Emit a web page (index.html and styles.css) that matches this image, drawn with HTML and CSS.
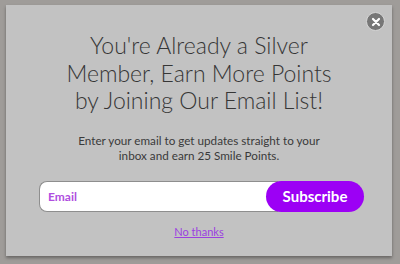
FILE: index.html
```html
<!DOCTYPE html>
<html lang="en">
<head>
  <meta charset="UTF-8">
  <title>Join our email list</title>
  <link rel="stylesheet" href="styles.css">
</head>
<body>
  <div class="popup">
    <button class="popup-close" aria-label="Close">
      <svg width="10" height="10" viewBox="0 0 10 10">
        <path d="M2 2 L8 8 M8 2 L2 8" stroke="#fff" stroke-width="2.2" stroke-linecap="round"/>
      </svg>
    </button>
    <h1 class="popup-titulo">You're Already a Silver<br>Member, Earn More Points<br>by Joining Our Email List!</h1>
    <p class="popup-texto">Enter your email to get updates straight to your<br>inbox and earn 25 Smile Points.</p>
    <form class="popup-form">
      <input class="popup-email" type="email" placeholder="Email">
      <button class="popup-boton" type="button">Subscribe</button>
    </form>
    <a class="popup-no" href="#">No thanks</a>
  </div>
</body>
</html>
```

FILE: styles.css
```css
* {
  margin: 0;
  padding: 0;
  box-sizing: border-box;
}
body {
  height: 100vh;
  background: #9f9c99;
  font-family: Lato, 'Noto Sans', sans-serif;
  padding: 5px 8px 8px 6px;
  overflow: hidden;
}
.popup {
  position: relative;
  width: 386px;
  height: 251px;
  background: #c2c2c2;
  box-shadow: 0 2px 3px rgba(0,0,0,0.35);
  display: flex;
  flex-direction: column;
  align-items: center;
  padding-top: 27px;
  color: #363636;
  text-align: center;
}
.popup-close {
  position: absolute;
  top: 7px;
  right: 7px;
  width: 19px;
  height: 19px;
  border-radius: 50%;
  background: #777;
  border: 1.5px solid #d6d6d6;
  display: flex;
  justify-content: center;
  align-items: center;
  cursor: pointer;
}
.popup-titulo {
  font-weight: 300;
  font-size: 23px;
  line-height: 27.5px;
}
.popup-texto {
  margin-top: 18px;
  font-size: 11.7px;
  line-height: 15px;
  color: #3a3a3a;
}
.popup-form {
  margin-top: 18px;
  display: flex;
  width: 325px;
  height: 31px;
  margin-left: 5px;
}
.popup-email {
  flex: 1;
  border: 1px solid #8e8e8e;
  border-right: none;
  border-radius: 8px 0 0 8px;
  background: #fff;
  padding-left: 8px;
  font-family: inherit;
  font-size: 12px;
  font-weight: bold;
  outline: none;
}
.popup-email::placeholder {
  color: #b04ee0;
}
.popup-boton {
  width: 98px;
  margin-left: -12px;
  border: none;
  border-radius: 16px;
  background: #9c00f5;
  color: #fff;
  font-family: inherit;
  font-weight: bold;
  font-size: 15px;
  cursor: pointer;
}
.popup-no {
  margin-top: 13px;
  font-size: 11px;
  color: #9b3fe0;
}
```
